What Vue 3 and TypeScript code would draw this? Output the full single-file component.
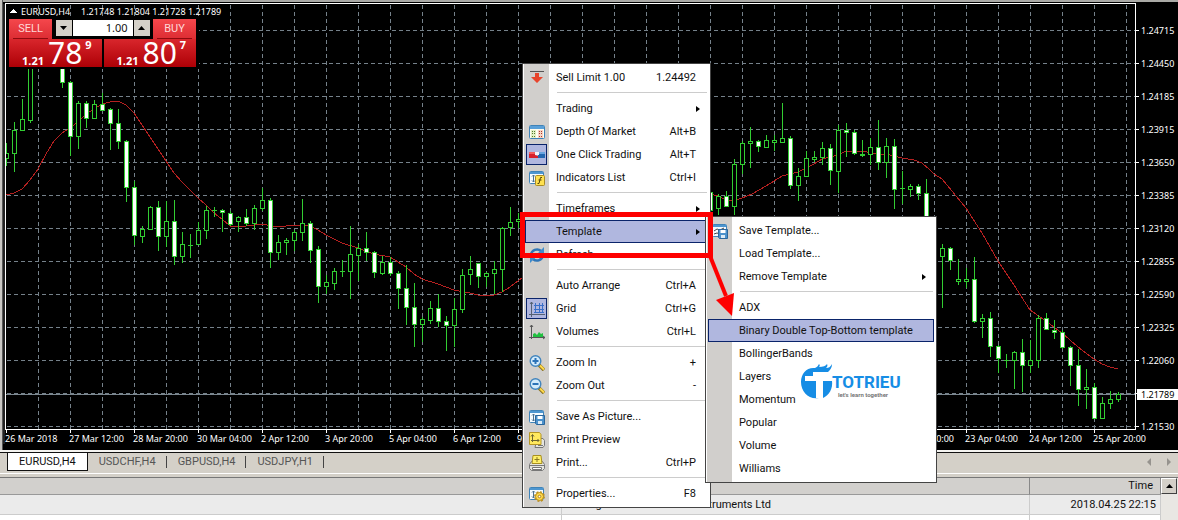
<script setup lang="ts">
import { ref } from 'vue'

type Candle = [x: number, high: number, low: number, top: number, bottom: number, filled: 0 | 1]

interface MenuRow {
  label: string
  shortcut?: string
  icon?: string
  submenu?: boolean
  checked?: boolean
  active?: boolean
  separated?: boolean
}

const candles: Candle[] = [
  [6, 143, 166, 153, 158, 0], [14, 122, 172, 130, 153, 0], [22, 99, 130, 119, 130, 0], [30, 50, 123, 60, 120, 0],
  [62, 50, 88, 60, 82, 1], [70, 81, 156, 82, 136, 1], [78, 101, 149, 103, 136, 0], [86, 101, 128, 103, 118, 1],
  [94, 100, 118, 104, 118, 0], [102, 93, 111, 104, 110, 1], [110, 108, 150, 109, 123, 1], [118, 109, 149, 123, 141, 1],
  [126, 140, 202, 141, 187, 1], [134, 181, 245, 187, 235, 1], [142, 226, 243, 229, 236, 0], [150, 206, 229, 207, 229, 0],
  [158, 201, 251, 207, 236, 1], [166, 201, 247, 221, 236, 0], [174, 200, 265, 221, 256, 1], [182, 232, 263, 244, 256, 0],
  [190, 234, 258, 245, 245, 0], [198, 222, 245, 230, 244, 0], [206, 206, 239, 210, 230, 0], [214, 207, 217, 210, 210, 0],
  [222, 209, 232, 210, 212, 1], [230, 211, 226, 213, 224, 1], [238, 216, 232, 217, 221, 0], [246, 209, 226, 217, 223, 1],
  [254, 205, 230, 208, 223, 0], [262, 188, 211, 200, 208, 0], [270, 198, 268, 200, 252, 1], [278, 235, 260, 242, 252, 0],
  [286, 238, 255, 240, 242, 0], [294, 230, 251, 232, 240, 0], [302, 199, 241, 223, 232, 0], [310, 221, 263, 223, 250, 1],
  [318, 246, 303, 249, 286, 1], [326, 275, 294, 282, 286, 0], [334, 268, 290, 271, 283, 0], [342, 260, 277, 271, 271, 0],
  [350, 226, 299, 254, 271, 0], [358, 244, 281, 248, 255, 0], [366, 232, 261, 248, 252, 1], [374, 251, 278, 252, 272, 1],
  [382, 256, 275, 262, 273, 0], [390, 257, 276, 262, 273, 1], [398, 271, 309, 273, 288, 1], [406, 265, 325, 288, 307, 1],
  [414, 283, 347, 307, 324, 1], [422, 317, 342, 319, 324, 0], [430, 301, 324, 308, 320, 0], [438, 294, 327, 308, 321, 1],
  [446, 316, 351, 321, 325, 1], [454, 298, 347, 309, 325, 0], [462, 269, 313, 275, 309, 0], [470, 256, 285, 269, 274, 0],
  [478, 263, 288, 263, 276, 1], [486, 272, 287, 273, 276, 0], [494, 261, 294, 269, 273, 0], [502, 227, 292, 228, 269, 0],
  [510, 207, 236, 222, 227, 0], [518, 213, 228, 219, 221, 0],
  [710, 190, 212, 192, 210, 1], [718, 194, 215, 196, 208, 0], [726, 191, 206, 196, 206, 1], [734, 159, 215, 164, 206, 0],
  [742, 141, 174, 143, 164, 0], [750, 127, 168, 141, 143, 0], [758, 140, 152, 141, 146, 1], [766, 135, 148, 140, 147, 0],
  [774, 135, 151, 140, 142, 0], [782, 103, 143, 138, 142, 0], [790, 136, 189, 138, 185, 1], [798, 168, 201, 176, 185, 0],
  [806, 151, 177, 158, 176, 0], [814, 151, 162, 157, 159, 0], [822, 142, 165, 148, 157, 0], [830, 144, 185, 148, 170, 1],
  [838, 125, 193, 130, 171, 0], [846, 123, 157, 130, 132, 1], [854, 130, 155, 132, 153, 1], [862, 140, 157, 154, 155, 1],
  [870, 138, 165, 147, 154, 0], [878, 120, 170, 147, 162, 1], [886, 138, 178, 146, 162, 0], [894, 139, 209, 146, 189, 1],
  [902, 171, 204, 188, 188, 0], [910, 184, 197, 186, 189, 0], [918, 184, 200, 186, 193, 1], [926, 179, 240, 193, 230, 1],
  [942, 244, 308, 248, 256, 0], [950, 247, 270, 248, 260, 1], [958, 259, 285, 279, 281, 0], [966, 268, 288, 279, 281, 0],
  [974, 257, 323, 279, 321, 1], [982, 314, 338, 318, 321, 0], [990, 312, 357, 318, 346, 1], [998, 345, 373, 346, 358, 1],
  [1006, 354, 368, 360, 360, 0], [1014, 351, 389, 352, 360, 0], [1022, 339, 392, 352, 365, 1], [1030, 340, 373, 360, 365, 0],
  [1038, 315, 368, 318, 360, 0], [1046, 313, 330, 318, 329, 1], [1054, 320, 339, 330, 332, 1], [1062, 330, 349, 332, 347, 1],
  [1070, 346, 386, 347, 365, 1], [1078, 349, 406, 365, 389, 1], [1086, 369, 409, 387, 389, 0], [1094, 383, 419, 387, 418, 1],
  [1102, 397, 418, 403, 418, 0], [1110, 391, 409, 399, 403, 0], [1118, 392, 402, 394, 399, 0],
]

const averageLeft = '6,195 14,193 22,189 30,180 38,169 46,154 54,141 62,133 70,128 78,122 86,114 94,109 102,104 110,102 118,101 126,105 134,113 142,125 150,137 158,149 166,161 174,173 182,182 190,190 198,198 206,205 214,213 222,219 230,226 238,227 254,225 262,224 278,227 294,225 310,226 318,230 326,235 342,243 358,248 374,254 390,257 398,262 406,267 414,274 422,279 438,284 446,287 454,290 470,293 478,295 494,295 502,292 510,287 522,278'
const averageRight = '710,194 718,196 726,200 734,201 742,198 752,194 766,186 782,176 790,174 798,172 814,164 822,159 838,155 846,151 862,151 878,154 890,155 902,158 914,160 922,163 930,170 934,174 942,179 966,208 982,233 998,261 1014,285 1030,310 1046,321 1062,333 1078,347 1094,359 1102,364 1110,367 1118,369'

const columns = Array.from({ length: 35 }, (_, i) => 38 + i * 32)
const prices = ['1.24715', '1.24450', '1.24185', '1.23915', '1.23650', '1.23385', '1.23120', '1.22855', '1.22590', '1.22325', '1.22060', '', '1.21530']
  .map((label, i) => ({ label, y: 30 + i * 33 }))
const times = ['26 Mar 2018', '27 Mar 12:00', '28 Mar 20:00', '30 Mar 04:00', '2 Apr 12:00', '3 Apr 20:00', '5 Apr 04:00', '6 Apr 12:00', '9 Apr 20:00', '', '', '', '', '', '19 Apr 20:00', '23 Apr 04:00', '24 Apr 12:00', '25 Apr 20:00']
  .map((label, i) => ({ label, x: 6 + i * 64 }))

const volume = ref('1.00')

const mainMenu: MenuRow[] = [
  { label: 'Sell Limit 1.00', shortcut: '1.24492', icon: 'sell' },
  { label: 'Trading', submenu: true, separated: true },
  { label: 'Depth Of Market', shortcut: 'Alt+B', icon: 'depth' },
  { label: 'One Click Trading', shortcut: 'Alt+T', icon: 'click', checked: true },
  { label: 'Indicators List', shortcut: 'Ctrl+I', icon: 'indicators' },
  { label: 'Timeframes', submenu: true, separated: true },
  { label: 'Template', submenu: true, active: true },
  { label: 'Refresh', icon: 'refresh' },
  { label: 'Auto Arrange', shortcut: 'Ctrl+A', separated: true },
  { label: 'Grid', shortcut: 'Ctrl+G', icon: 'grid', checked: true },
  { label: 'Volumes', shortcut: 'Ctrl+L', icon: 'volumes' },
  { label: 'Zoom In', shortcut: '+', icon: 'zoomin', separated: true },
  { label: 'Zoom Out', shortcut: '-', icon: 'zoomout' },
  { label: 'Save As Picture...', icon: 'save', separated: true },
  { label: 'Print Preview', icon: 'preview' },
  { label: 'Print...', shortcut: 'Ctrl+P', icon: 'print' },
  { label: 'Properties...', shortcut: 'F8', icon: 'properties', separated: true },
]

const templateMenu: MenuRow[] = [
  { label: 'Save Template...', icon: 'template' },
  { label: 'Load Template...' },
  { label: 'Remove Template', submenu: true },
  { label: 'ADX', separated: true },
  { label: 'Binary Double Top-Bottom template', active: true },
  { label: 'BollingerBands' },
  { label: 'Layers' },
  { label: 'Momentum' },
  { label: 'Popular' },
  { label: 'Volume' },
  { label: 'Williams' },
]

const menus = [
  { id: 'main', label: 'Chart menu', rows: mainMenu },
  { id: 'template', label: 'Template menu', rows: templateMenu },
]

const tabs = ['EURUSD,H4', 'USDCHF,H4', 'GBPUSD,H4', 'USDJPY,H1']
const activeTab = ref('EURUSD,H4')
const nextSubjects = [
  [34, 80, 117, 178, 222],
  [30, 95, 146, 241],
]
</script>

<template>
  <main class="terminal">
    <section class="chart-window" aria-label="EURUSD,H4 chart">
      <svg class="chart" viewBox="0 0 1178 450" shape-rendering="crispEdges">
        <rect width="1178" height="450" fill="#000" />
        <rect width="1178" height="2" fill="#a9a9a5" />
        <rect width="2" height="450" fill="#c8c6c2" />
        <rect x="2" width="1" height="450" fill="#555" />
        <g stroke="#75818a" stroke-dasharray="4 3">
          <line v-for="x in columns" :key="x" :x1="x + 0.5" :x2="x + 0.5" y1="5" y2="429" />
          <line v-for="p in prices" :key="p.y" x1="7" x2="1135" :y1="p.y + 0.5" :y2="p.y + 0.5" />
        </g>
        <line x1="6" x2="1135" y1="394.5" y2="394.5" stroke="#7c8891" />
        <g fill="none" stroke="#b52020">
          <polyline :points="averageLeft" />
          <polyline :points="averageRight" />
        </g>
        <g stroke="#32cd32">
          <template v-for="c in candles" :key="c[0]">
            <line :x1="c[0] + 0.5" :x2="c[0] + 0.5" :y1="c[1]" :y2="c[2]" />
            <line v-if="c[3] === c[4]" :x1="c[0] - 2" :x2="c[0] + 3" :y1="c[3] + 0.5" :y2="c[3] + 0.5" />
            <rect v-else :x="c[0] - 1.5" :y="c[3] + 0.5" width="4" :height="c[4] - c[3]" :fill="c[5] ? '#fff' : '#000'" />
          </template>
        </g>
        <rect x="3" y="4" width="2" height="440" fill="#222" />
        <rect x="5.5" y="3.5" width="1130" height="426" fill="none" stroke="#fff" />
        <g stroke="#fff">
          <line v-for="p in prices" :key="p.y" x1="1136" x2="1139" :y1="p.y + 0.5" :y2="p.y + 0.5" />
          <line v-for="t in times" :key="t.x" :x1="t.x + 0.5" :x2="t.x + 0.5" y1="430" y2="433" />
        </g>
        <g class="axis">
          <text v-for="p in prices" :key="p.y" x="1141" :y="p.y + 4">{{ p.label }}</text>
          <text v-for="t in times" :key="t.x" :x="t.x - 1" y="442">{{ t.label }}</text>
          <path d="M9 13h8l-4-4z" />
          <text x="21" y="15">EURUSD,H4</text>
          <text x="81" y="15">1.21748 1.21804 1.21728 1.21789</text>
        </g>
        <rect x="1137" y="389" width="41" height="11" fill="#fff" />
        <text class="axis bid" x="1141" y="398">1.21789</text>
      </svg>

      <form class="one-click" @submit.prevent>
        <div class="one-click-top">
          <button type="button" class="side">SELL</button>
          <div class="stepper">
            <button type="button" aria-label="Decrease volume"><svg viewBox="0 0 7 4"><path d="M0 0h7L3.500 4z" /></svg></button>
            <input v-model="volume" aria-label="Volume">
            <button type="button" aria-label="Increase volume"><svg viewBox="0 0 7 4"><path d="M0 4h7L3.500 0z" /></svg></button>
          </div>
          <button type="button" class="side">BUY</button>
        </div>
        <div class="quotes">
          <button type="button" class="quote"><b>1.21</b><span>78</span><sup>9</sup></button>
          <button type="button" class="quote"><b>1.21</b><span>80</span><sup>7</sup></button>
        </div>
      </form>
    </section>

    <nav class="tabs" aria-label="Charts">
      <button v-for="tab in tabs" :key="tab" type="button" :class="{ selected: tab === activeTab }" @click="activeTab = tab">{{ tab }}</button>
      <svg class="tab-scroll" viewBox="0 0 24 8"><path d="M4 0v8L0 4zM20 0v8l4-4z" /></svg>
    </nav>

    <section class="mailbox">
      <table>
        <colgroup><col class="subject"><col><col class="time"></colgroup>
        <thead><tr><th></th><th></th><th class="when">Time</th></tr></thead>
        <tbody>
          <tr class="shaded"><td></td><td>Trading Point Of Financial Instruments Ltd</td><td class="when">2018.04.25 22:15</td></tr>
          <tr>
            <td v-for="(marks, i) in nextSubjects" :key="i">
              <svg class="tips" width="260" height="6"><rect v-for="m in marks" :key="m" :x="m" y="5" width="2" height="1" /></svg>
            </td>
            <td></td>
          </tr>
        </tbody>
      </table>
      <div class="scrollbar"><button type="button" aria-label="Scroll up"><svg viewBox="0 0 7 4"><path d="M0 4h7L3.500 0z" /></svg></button></div>
    </section>

    <div v-for="menu in menus" :key="menu.id" class="menu" :class="menu.id" role="menu" :aria-label="menu.label">
      <template v-for="row in menu.rows" :key="row.label">
        <hr v-if="row.separated">
        <button type="button" role="menuitem" class="row" :class="{ active: row.active }">
          <span class="icon" :class="{ checked: row.checked }">
            <svg v-if="row.icon" viewBox="0 0 16 16">
              <g v-if="row.icon === 'sell'"><path d="M1 1.500h14" stroke="#555" /><path d="M6 3h4v4h4l-6 6-6-6h4z" fill="#e8452c" /></g>
              <g v-else-if="row.icon === 'depth'">
                <rect x=".5" y="1.500" width="15" height="13" rx="1" fill="#fffdf0" stroke="#3f83b8" /><path d="M1 2h14v3H1z" fill="#5aa0d8" />
                <path d="M2 6h5v8H2z" fill="#e2efc4" /><path d="M9 6h5v8H9z" fill="#f6d3c4" />
                <g shape-rendering="crispEdges"><path d="M3 7.500h4M3 9.500h4M3 12.500h4" stroke="#557a2a" stroke-dasharray="1 1" /><path d="M10 7.500h4M10 9.500h4M10 12.500h4" stroke="#b03a2a" stroke-dasharray="1 1" /></g>
              </g>
              <g v-else-if="row.icon === 'click'">
                <path d="M0 5h6v3l3 1v2H0z" fill="#d8202c" /><path d="M0 5h6v2H0z" fill="#f06060" /><path d="M9 5h7v6H9z" fill="#2468b0" /><path d="M10 5h6v2h-6z" fill="#6aa6e0" /><path d="M6 5h4v3H6z" fill="#f3f3fa" />
              </g>
              <g v-else-if="row.icon === 'refresh'" fill="none" stroke="#2f76b8" stroke-width="2.500">
                <path d="M2 8a6 6 0 0 1 10-4" /><path d="M14 8a6 6 0 0 1-10 4" /><path d="M15 0v7H8zM1 16V9h7z" fill="#3f8ccc" stroke="none" />
              </g>
              <g v-else-if="row.icon === 'grid'" fill="none"><path d="M5 4.500h10M5 8.500h10M6.500 2v10M10.500 2v10M13.500 2v10M5 11.500h10" stroke="#3a6fc8" /><path d="M2.500 1v15M0 13.500h16M1 3l1.500-2L4 3" stroke="#566274" /></g>
              <g v-else-if="row.icon === 'volumes'"><path d="M2.500 1v14M0 13.500h16M1 3l1.500-2L4 3M14 12l2 1.500-2 1.500" stroke="#555" fill="none" /><path d="M4 13v-3l2-1 2 2 2-3 2 2 2-1v4z" fill="#20c040" /></g>
              <g v-else-if="row.icon === 'zoomin' || row.icon === 'zoomout'">
                <path d="M10 10l5 5" stroke="#8a7320" stroke-width="3.500" /><path d="M11 10.500l4 4" stroke="#ffd94a" stroke-width="2" />
                <circle cx="6.500" cy="6" r="5.300" fill="#d3ebfb" stroke="#4285bd" stroke-width="1.400" /><path d="M3.500 6h6" stroke="#2b73b8" stroke-width="2" />
                <path v-if="row.icon === 'zoomin'" d="M6.500 3v6" stroke="#2b73b8" stroke-width="2" />
              </g>
              <g v-else-if="row.icon === 'print'">
                <path d="M2.500 6.500h11l2 3v4l-2 2h-11l-2-2v-4z" fill="#e5e5df" stroke="#777" /><path d="M4 .5h8l1 8H3z" fill="#fff06a" stroke="#a99020" /><path d="M8 2v5M5.500 4.500h5" stroke="#8a7a20" />
                <path d="M1 10.500h14" stroke="#777" /><path d="M3.500 12.500h9v2h-9z" fill="#fff" stroke="#777" />
              </g>
              <g v-else-if="row.icon === 'preview'">
                <path d="M8 6.500h6l1.500 2v5l-1.500 2H6z" fill="#e5e5df" stroke="#777" /><path d="M9 13.500h5" stroke="#777" />
                <path d="M.5.5h10l1.500 2v10H.5z" fill="#ffe95e" stroke="#b69622" /><path d="M3.500 3v7M2 8.500h8M2 4.500l1.500-2 1.500 2M8.500 7l1.500 1.500L8.500 10" stroke="#6d6530" fill="none" />
              </g>
              <g v-else>
                <rect x=".5" y="1.500" width="14" height="12" rx="1" fill="#f5fbff" stroke="#3f83b8" /><path d="M1 2h13v2H1z" fill="#4d96d0" />
                <path v-if="row.icon === 'template'" d="M2 8l3-2 3 1 4-2M2 11l3-1 3 1" stroke="#444" fill="none" />
                <path v-else d="M4.500 5v7M3 6.500L4.500 5 6 6.500M3 10.500L4.500 12 6 10.500M8 8.500h4" stroke="#4e7290" fill="none" />
                <g v-if="row.icon === 'indicators'"><rect x="6.500" y="5.500" width="9" height="10" rx="1" fill="#ffe150" stroke="#a88b25" /><path d="M13 7.500h-1.500l-1.500 6H8.500M9.500 10h3" stroke="#54450b" fill="none" /></g>
                <g v-else-if="row.icon === 'properties'"><circle cx="10.500" cy="10.500" r="4.600" fill="none" stroke="#b88c1c" stroke-width="1.600" stroke-dasharray="2 1.600" /><circle cx="10.500" cy="10.500" r="4" fill="#ffd94a" stroke="#b88c1c" /><circle cx="10.500" cy="10.500" r="1.300" fill="#fff" stroke="#a88225" /></g>
                <g v-else><path d="M6.500 6.500h9v9h-8l-1-1z" fill="#4b91cb" stroke="#2b679c" /><path d="M8.500 7h5v3h-5z" fill="#fff" /><path d="M9 12h4v3H9z" fill="#dcebf6" /></g>
              </g>
            </svg>
          </span>
          <span class="label">{{ row.label }}</span>
          <span v-if="row.shortcut" class="shortcut">{{ row.shortcut }}</span>
          <svg v-if="row.submenu" class="more" viewBox="0 0 4 6"><path d="M0 0v6l4-3z" /></svg>
        </button>
      </template>
      <svg v-if="menu.id === 'template'" class="brand" viewBox="0 0 104 36">
        <path d="M2 19C2 10 8 4 16 5c2-1 3-2 4-4 1 1 1 2 0 3 4 0 7-1 8-3 1 2 0 3-1 4 3 0 4-1 6-4 0 4-2 6-4 8H14v4h6v22C10 37 2 29 2 19z" fill="#168de5" />
        <path d="M6 13h27v4h-9v19l-7-1V18H6z" fill="#fff" /><path d="M24 18h9c1 8-3 14-9 17z" fill="#168de5" />
        <text x="33" y="25" class="brand-name">TOTRIEU</text>
        <text x="39" y="34" class="brand-tag">let's learn together</text>
      </svg>
    </div>

    <svg class="callout" viewBox="0 0 220 110">
      <rect x="4.500" y="4.500" width="188" height="41" fill="none" stroke="#fe0000" stroke-width="5" />
      <path d="M192 46l16 40" stroke="#fe0000" stroke-width="4" /><path d="M198 90l18-7-2 23z" fill="#fe0000" />
    </svg>
  </main>
</template>

<style>
body { margin: 0; background: #fff; }
</style>

<style scoped>
.terminal { position: relative; min-height: 100vh; overflow: hidden; font: 11px/16px Roboto, "Noto Sans", sans-serif; color: #111; display: flex; flex-direction: column; }
button, input { font: inherit; color: inherit; margin: 0; padding: 0; border: 0; border-radius: 0; }
.chart-window { position: relative; }
.chart { display: block; width: 100%; }
.axis { font: 9px "Noto Sans", sans-serif; fill: #fff; }
.axis.bid { fill: #000; }

.one-click { position: absolute; left: 6px; top: 18px; width: 187px; padding: 1px 3px 2px; background: #000; font-family: "Noto Sans", sans-serif; }
.one-click-top { display: flex; justify-content: space-between; }
.side { width: 43px; height: 20px; background: linear-gradient(#f5474c, #dc2d33); color: #ffd9d9; position: relative; font-family: Roboto, sans-serif; }
.side::after { content: ""; position: absolute; left: 4px; right: 4px; bottom: 0; border-bottom: 1px solid #8d0a0e; }
.stepper { display: flex; gap: 1px; height: 16px; margin-top: 1px; }
.stepper button { width: 16px; background: #d4d0c8; display: grid; place-items: center; }
.stepper svg, .scrollbar svg { width: 7px; height: 4px; }
.stepper input { width: 55px; padding-right: 5px; background: #fff; text-align: right; outline: 0; }
.quotes { display: flex; gap: 2px; }
.quote { flex: 1; height: 28px; background: linear-gradient(#d9262c, #ad0006); color: #fff; display: flex; align-items: flex-end; padding: 0 0 0 13px; }
.quote b { font-size: 11px; line-height: 12px; }
.quote span { font-size: 30px; line-height: 28px; margin-left: 4px; }
.quote sup { font-size: 11px; font-weight: 700; line-height: 11px; align-self: flex-start; margin-left: 3px; }

.tabs { display: flex; height: 20px; margin-top: 2px; padding-left: 7px; background: #d4d0c8; border-top: 1px solid #111; box-shadow: 0 -2px #f4f3f0; border-bottom: 1px solid #fff; }
.tabs button { height: 18px; padding: 0 11px; background: none; color: #555; position: relative; }
.tabs button:not(.selected)::after { content: ""; position: absolute; right: 0; top: 3px; height: 12px; border-right: 1px solid #444; }
.tabs button.selected { background: #fff; color: #111; border: 1px solid #111; border-top: 0; }
.tab-scroll { width: 24px; height: 8px; margin: 5px 7px 0 auto; fill: #96938e; }

.mailbox { display: flex; flex: 1; border-top: 3px solid #d4d0c8; background: #fff; }
table { flex: 1; border-collapse: separate; border-spacing: 0; table-layout: fixed; border-top: 1px solid #777; align-self: flex-start; }
.subject { width: 562px; }
.time { width: 131px; }
th { height: 16px; padding: 0 7px 0 3px; background: #d2d0cd; border-bottom: 1px solid #999; border-right: 1px solid #888; font-weight: 400; text-align: left; }
td { height: 19px; padding: 0 4px 0 3px; border-bottom: 1px solid #ccc; border-right: 1px solid #ccc; white-space: nowrap; vertical-align: top; line-height: 19px; }
.shaded td { background: #ebebeb; }
th.when, td.when { text-align: right; }
.tips { display: block; margin-left: -3px; }
.scrollbar { width: 17px; background: #e9e7e3; border-top: 1px solid #777; }
.scrollbar button { width: 16px; height: 16px; background: #d4d0c8; border: 1px solid; border-color: #fff #404040 #404040 #fff; display: grid; place-items: center; }

.menu { position: absolute; box-sizing: border-box; padding: 2px; border: 1px solid #444; background: linear-gradient(90deg, #fff 1px, #d1cfcc 1px, #d1cfcc 26px, #fff 26px); }
.menu.main { left: 522px; top: 63px; width: 189px; }
.menu.template { left: 705px; top: 216px; width: 232px; }
.menu hr { margin: 3px 1px 4px 32px; border: 0; border-top: 1px solid #ccc; }
.row { display: flex; align-items: center; box-sizing: border-box; width: 100%; height: 23px; padding-right: 11px; background: none; border: 1px solid transparent; text-align: left; white-space: nowrap; }
.row.active { background: #b0b7df; border-color: #0a246a; }
.icon { flex: none; width: 21px; height: 21px; box-sizing: border-box; display: grid; place-items: center; margin-right: 9px; }
.icon svg { width: 16px; height: 16px; }
.checked { background: #b0b7df; border: 1px solid #0a246a; }
.shortcut, .more { margin-left: auto; }
.more { width: 4px; height: 6px; margin-right: -4px; }
.brand { position: absolute; left: 93px; top: 146px; width: 104px; height: 36px; }
.brand-name { font: 700 17px Roboto, sans-serif; fill: #168de5; }
.brand-tag { font: 700 6px Roboto, sans-serif; fill: #777; }
.callout { position: absolute; left: 518px; top: 210px; width: 220px; height: 110px; pointer-events: none; }
</style>
